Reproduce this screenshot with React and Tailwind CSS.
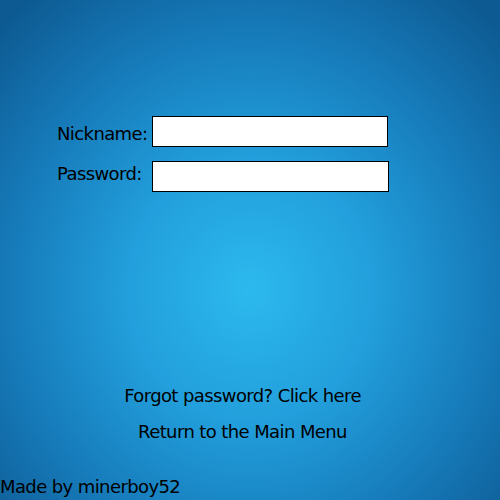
export default function App() {
  return (
    <div
      className="relative w-[500px] h-[500px] overflow-hidden bg-[radial-gradient(ellipse_70%_75%_at_50%_58%,#2cb9ee_0%,#229fdc_35%,#1679b8_70%,#0d5a92_100%)] text-black"
      style={{ fontFamily: '"DejaVu Sans", sans-serif' }}
    >
      <div className="flex flex-col pt-[116px] pl-[57px] gap-[14px]">
        <div className="flex items-center h-[31px]">
          <span className="w-[95px] text-[18px] tracking-[-0.6px] mt-[3px]">Nickname:</span>
          <div className="w-[236px] h-[31px] bg-white border border-black" />
        </div>
        <div className="flex items-center h-[31px]">
          <span className="w-[95px] text-[18px] tracking-[-0.6px] -mt-[7px]">Password:</span>
          <div className="w-[237px] h-[31px] bg-white border border-black" />
        </div>
      </div>
      <div className="flex flex-col items-center mt-[190px] ml-[-15px] gap-[9px] text-[18px] tracking-[-0.6px]">
        <div>Forgot password? Click here</div>
        <div>Return to the Main Menu</div>
      </div>
      <div className="absolute left-0 bottom-0 text-[18px] tracking-[-0.6px]">Made by minerboy52</div>
    </div>
  );
}
